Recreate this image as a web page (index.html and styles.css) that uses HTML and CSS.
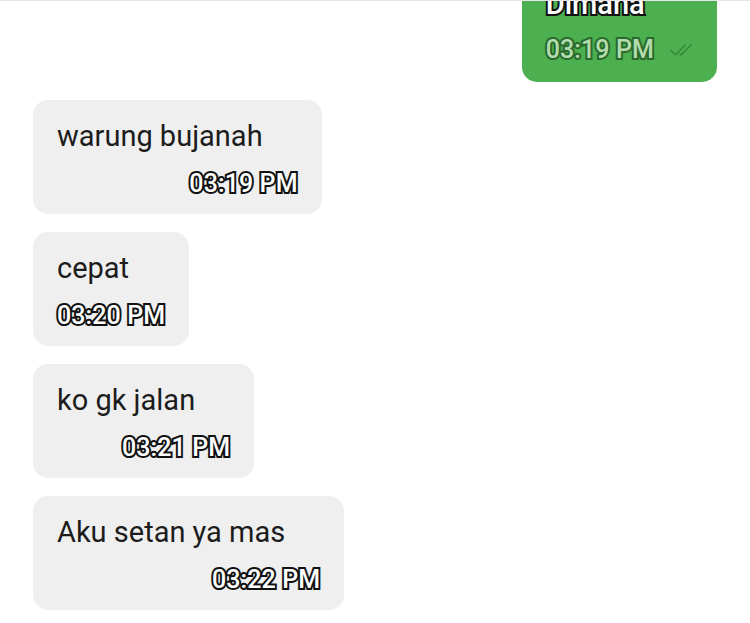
FILE: index.html
```html
<!DOCTYPE html>
<html lang="en">
<head>
    <meta charset="UTF-8">
    <meta name="viewport" content="width=device-width, initial-scale=1.0">
    <title>Chat</title>
    <link rel="stylesheet" href="styles.css">
</head>
<body>
    <div class="chat">
        <!-- outgoing -->
        <div class="bubble bubble-out">
            <p class="msg-text outline">Dimana</p>
            <div class="meta">
                <span class="time">03:19 PM</span>
                <svg class="ticks" width="27" height="16" viewBox="0 0 27 16">
                    <path d="M1 8.5 L5.5 13 L15 3" fill="none" stroke="#2f7d33" stroke-width="1.5" stroke-linecap="round" stroke-linejoin="round"/>
                    <path d="M10 12 L11 13 L21 3" fill="none" stroke="#2f7d33" stroke-width="1.5" stroke-linecap="round" stroke-linejoin="round"/>
                </svg>
            </div>
        </div>

        <!-- incoming -->
        <div class="bubble bubble-in">
            <p class="msg-text">warung bujanah</p>
            <span class="time">03:19 PM</span>
        </div>
        <div class="bubble bubble-in">
            <p class="msg-text">cepat</p>
            <span class="time">03:20 PM</span>
        </div>
        <div class="bubble bubble-in">
            <p class="msg-text">ko gk jalan</p>
            <span class="time">03:21 PM</span>
        </div>
        <div class="bubble bubble-in">
            <p class="msg-text">Aku setan ya mas</p>
            <span class="time">03:22 PM</span>
        </div>
    </div>
</body>
</html>
```

FILE: styles.css
```css
* {
  margin: 0;
  padding: 0;
  box-sizing: border-box;
}

body {
  background-color: #ffffff;
  font-family: Roboto, "Liberation Sans", sans-serif;
  border-top: 1px solid #e6e6e6;
  overflow: hidden;
}

.chat {
  display: flex;
  flex-direction: column;
  align-items: flex-start;
  gap: 18px;
  padding: 0 33px;
}

.bubble {
  display: flex;
  flex-direction: column;
  border-radius: 15px;
  padding: 19px 24px 15px 24px;
}

.bubble-in {
  background-color: #efefef;
}

.bubble-in .msg-text {
  padding-right: 35px;
}

.bubble-out {
  align-self: flex-end;
  background-color: #4caf50;
  margin-top: -33px;
  padding: 19px 20px 17px 24px;
}

.msg-text {
  font-size: 29px;
  line-height: 34px;
  color: #1c1c1c;
  white-space: nowrap;
}

.outline {
  color: #ffffff;
  -webkit-text-stroke: 4px #111111;
  paint-order: stroke fill;
  font-weight: 500;
}

.time {
  align-self: flex-end;
  margin-top: 16px;
  font-size: 25px;
  line-height: 30px;
  font-weight: 500;
  letter-spacing: 0.1px;
  color: #ffffff;
  -webkit-text-stroke: 4px #111111;
  paint-order: stroke fill;
  white-space: nowrap;
}

.meta {
  display: flex;
  align-items: center;
  gap: 16px;
  margin-top: 14px;
}

.meta .time {
  margin-top: 0;
  color: #b3dcae;
  -webkit-text-stroke: 4px #2a6a2d;
}

.ticks {
  opacity: 0.75;
}
```
